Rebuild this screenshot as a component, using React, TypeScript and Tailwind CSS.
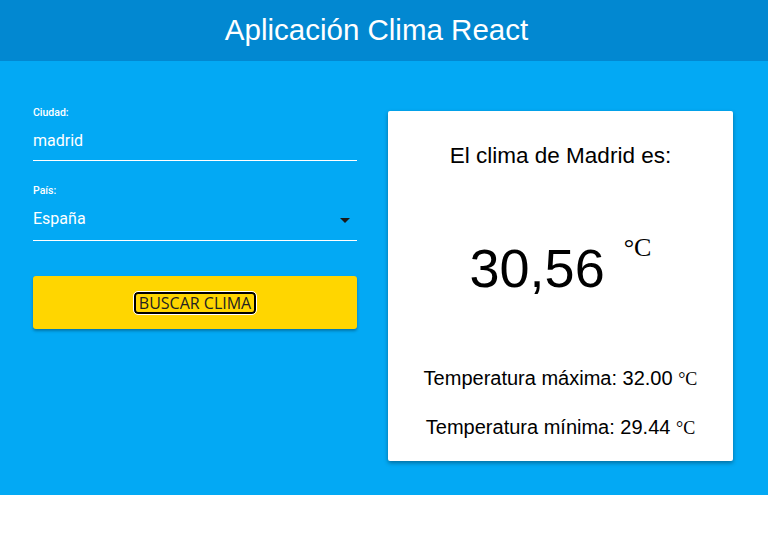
import React, { useState } from 'react';

const App: React.FC = () => {
  const [ciudad, setCiudad] = useState('madrid');
  const [pais, setPais] = useState('ES');

  return (
    <div className="min-h-screen bg-white">
      {/* HEADER */}
      <nav className="h-[61px] bg-[#0288d1] flex items-center justify-center pr-[15px]">
        <h1 className="text-white text-[29.5px] font-['Liberation_Sans',Arial,sans-serif] leading-none pb-[2px]">
          Aplicación Clima React
        </h1>
      </nav>

      {/* CONTENIDO */}
      <div className="bg-[#03a9f4] pt-[50px] pb-[34px]">
        <div className="flex pl-[33px] gap-[31px]">
          {/* FORMULARIO */}
          <form
            onSubmit={e => e.preventDefault()}
            className="w-[324px] -mt-[5px] font-['Roboto',sans-serif]"
          >
            <label className="block text-white text-[10.5px] font-medium leading-[14px]">Ciudad:</label>
            <input
              value={ciudad}
              onChange={e => setCiudad(e.target.value)}
              className="w-full h-[41px] bg-transparent text-white text-[16px] border-b border-white outline-none"
            />

            <label className="block text-white text-[10.5px] font-medium leading-[14px] mt-[23px]">País:</label>
            <div className="relative">
              <select
                value={pais}
                onChange={e => setPais(e.target.value)}
                className="w-full h-[43px] appearance-none bg-transparent text-white text-[16px] border-b border-white outline-none"
              >
                <option value="ES">España</option>
                <option value="AR">Argentina</option>
                <option value="MX">México</option>
              </select>
              <div className="absolute right-[7px] top-[20px] w-0 h-0 border-l-[5px] border-r-[5px] border-t-[5px] border-l-transparent border-r-transparent border-t-[#1a1a1a] pointer-events-none" />
            </div>

            <button
              type="submit"
              className="mt-[35px] w-full h-[53px] bg-[#ffd600] rounded-[3px] shadow-[0_2px_3px_rgba(0,0,0,0.3)] flex items-center justify-center"
            >
              <span className="font-['Open_Sans',sans-serif] text-[16px] text-[#222] leading-[18px] px-[3px] border-2 border-black rounded-[4px] outline outline-1 outline-white">
                BUSCAR CLIMA
              </span>
            </button>
          </form>

          {/* RESULTADO */}
          <div className="w-[345px] h-[350px] bg-white rounded-[2px] shadow-[0_2px_4px_rgba(0,0,0,0.35)] font-['Liberation_Sans',Arial,sans-serif] text-black flex flex-col items-center">
            <h2 className="text-[22.5px] mt-[32px] leading-[26px]">El clima de Madrid es:</h2>
            <p className="mt-[72px] flex items-start leading-none">
              <span className="text-[54px]">30,56</span>
              <span className="ml-[19px] -mt-[6px] text-[26px] font-['Liberation_Serif','Times_New_Roman',serif]">°C</span>
            </p>
            <p className="mt-[71px] text-[20px] leading-[24px]">
              Temperatura máxima: 32.00 <span className="text-[18px] font-['Liberation_Serif','Times_New_Roman',serif]">°C</span>
            </p>
            <p className="mt-[24px] text-[20px] leading-[24px]">
              Temperatura mínima: 29.44 <span className="text-[18px] font-['Liberation_Serif','Times_New_Roman',serif]">°C</span>
            </p>
          </div>
        </div>
      </div>
    </div>
  );
};

export default App;
